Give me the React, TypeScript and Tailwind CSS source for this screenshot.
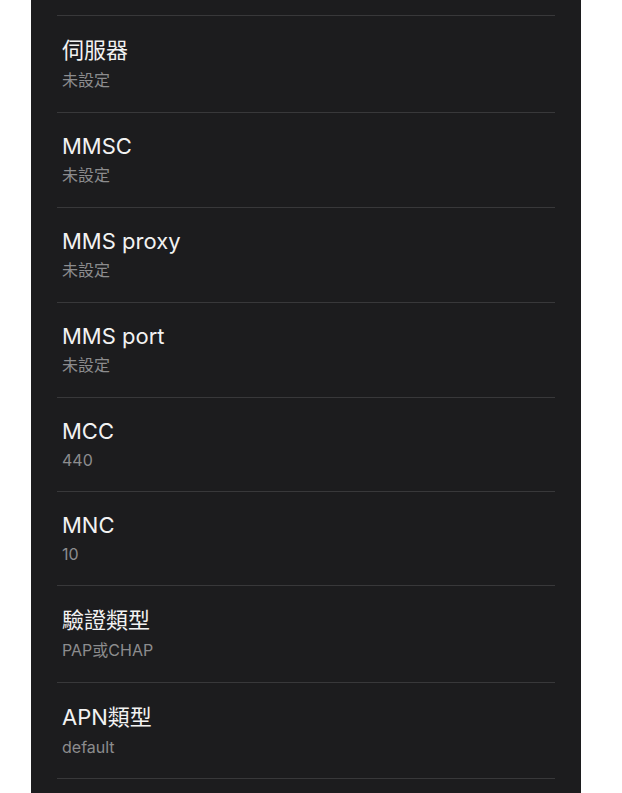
import React from 'react';

type Field = { label: string; value: string };

const FIELDS: Field[] = [
  { label: '伺服器', value: '未設定' },
  { label: 'MMSC', value: '未設定' },
  { label: 'MMS proxy', value: '未設定' },
  { label: 'MMS port', value: '未設定' },
  { label: 'MCC', value: '440' },
  { label: 'MNC', value: '10' },
  { label: '驗證類型', value: 'PAP或CHAP' },
  { label: 'APN類型', value: 'default' },
];

// CJK glyphs sit in a slightly taller line box than the latin ones
const hasCJK = (s: string) => /[\u3400-\u9fff]/.test(s);

const FieldRow: React.FC<{ field: Field }> = ({ field }) => (
  <div className="border-b border-[#38383a] pl-[5px] pt-[19px] pb-[21px]">
    <div
      className={
        hasCJK(field.label)
          ? 'text-[22px] leading-[30px] text-[#f2f2f2]'
          : 'text-[22px] leading-[28px] text-[#f2f2f2]'
      }
    >
      {field.label}
    </div>
    <div
      className={
        hasCJK(field.value)
          ? 'mt-[5px] text-[16px] leading-[21px] text-[#8c8c8e]'
          : 'mt-[5px] text-[16px] leading-[20px] text-[#8c8c8e]'
      }
    >
      {field.value}
    </div>
  </div>
);

const App: React.FC = () => {
  return (
    <div
      className="min-h-screen bg-white"
      style={{ fontFamily: 'Inter, "Noto Sans CJK TC", sans-serif' }}
    >
      <div className="ml-[31px] w-[550px] h-[793px] overflow-hidden bg-[#1c1c1e] px-[26px]">
        {/* tail of the row above, cut off by the screen */}
        <div className="h-[16px] border-b border-[#38383a]" />
        {FIELDS.map((f) => (
          <FieldRow key={f.label} field={f} />
        ))}
      </div>
    </div>
  );
};

export default App;
